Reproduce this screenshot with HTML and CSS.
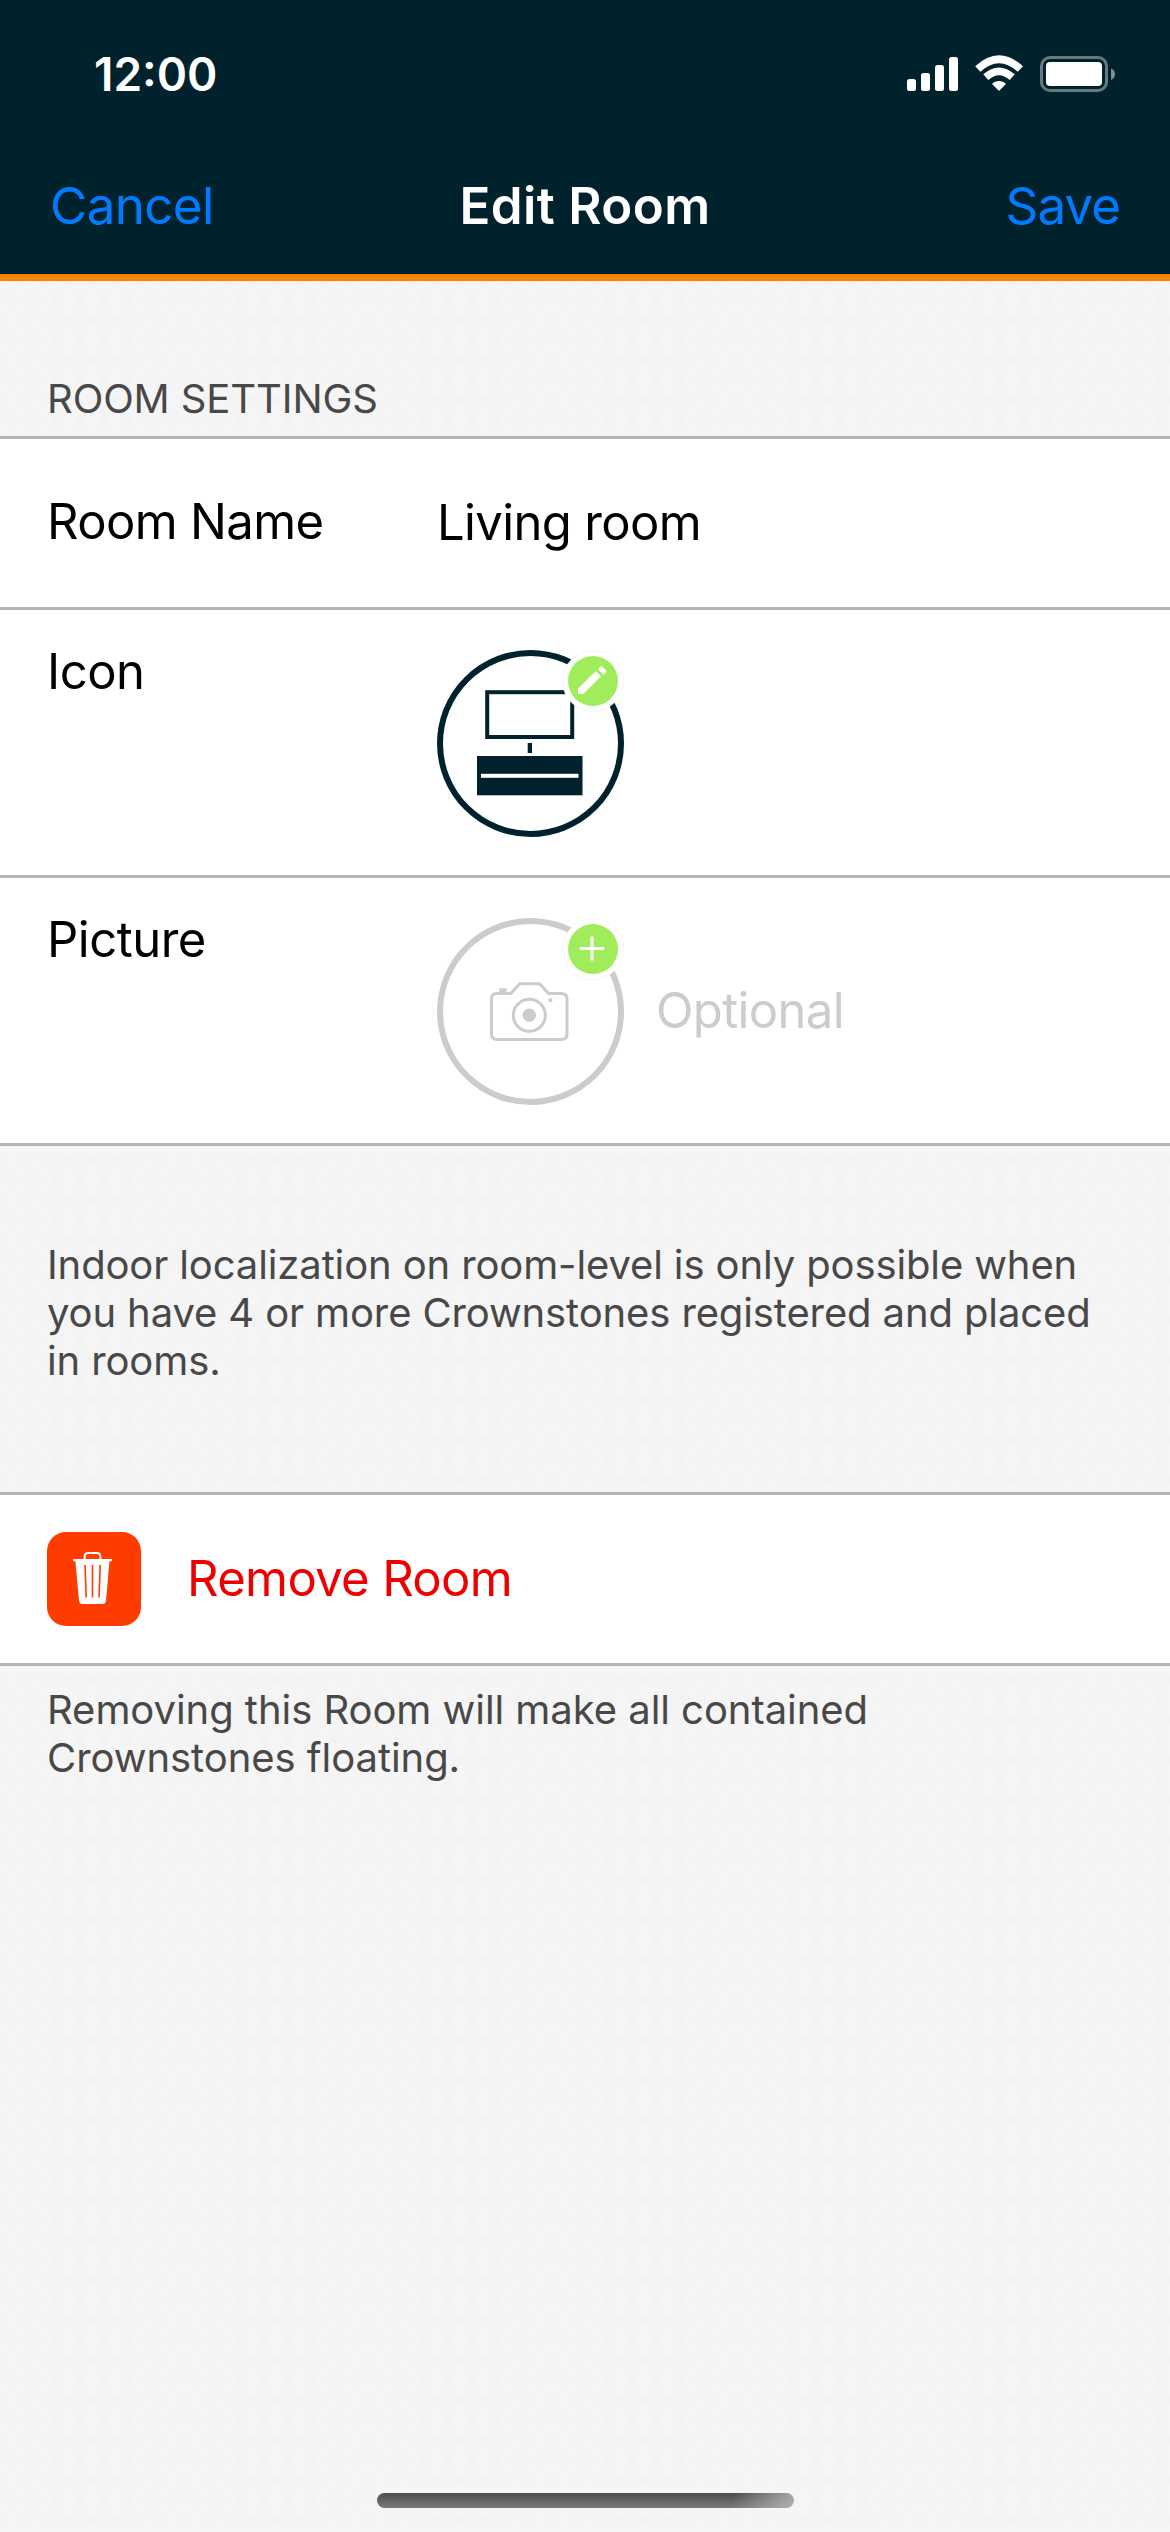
FILE: index.html
```html
<!DOCTYPE html>
<html lang="en">
<head>
<meta charset="utf-8">
<title>Edit Room</title>
<link rel="stylesheet" href="styles.css">
</head>
<body>
<div class="screen">
  <header class="header">
    <div class="status">
      <span class="time">12:00</span>
      <svg class="status-icons" width="208" height="40" viewBox="907 54 208 40">
        <g fill="#fff">
          <rect x="907" y="79" width="9" height="12" rx="2.5"/>
          <rect x="921" y="73" width="9" height="18" rx="2.5"/>
          <rect x="935" y="65" width="9" height="26" rx="2.5"/>
          <rect x="949" y="57" width="9" height="34" rx="2.5"/>
          <rect x="1046" y="62" width="56" height="24" rx="4"/>
          <path d="M999 91l-6.4-6.6q-.6-.8.2-1.4 6.200-4 12.400 0 .8.6.2 1.400z"/>
        </g>
        <g fill="none" stroke="#fff" stroke-width="7.600">
          <path d="M977.800 69Q999 49.500 1020.400 69"/>
          <path d="M985.800 77.200Q999 65.500 1012.200 77.200"/>
        </g>
        <rect x="1041.500" y="57.500" width="65" height="33" rx="8.500" fill="none" stroke="#66797f" stroke-width="3"/>
        <path d="M1111 68.500q4 1.500 4 5.500t-4 6z" fill="#808f94"/>
      </svg>
    </div>
    <nav class="nav">
      <span class="link">Cancel</span>
      <h1 class="title">Edit Room</h1>
      <span class="link save">Save</span>
    </nav>
  </header>

  <main class="content">
    <h2 class="section">ROOM SETTINGS</h2>
    <div class="group">
      <div class="row row-name">
        <span class="label">Room Name</span>
        <span class="value">Living room</span>
      </div>
      <div class="row row-media">
        <span class="label">Icon</span>
        <svg class="ring" width="187" height="187" viewBox="0 0 187 187">
          <circle cx="93.500" cy="93.500" r="90.500" fill="none" stroke="#00222c" stroke-width="6"/>
          <rect x="50.200" y="42.200" width="85" height="44.800" fill="none" stroke="#00222c" stroke-width="4"/>
          <rect x="90.700" y="93" width="4.300" height="10" fill="#00222c"/>
          <rect x="40" y="106" width="105.500" height="39.300" fill="#00222c"/>
          <rect x="44" y="123.800" width="97.500" height="4" fill="#fff"/>
          <circle cx="156" cy="31" r="30.500" fill="#fff" stroke="#e6fad2" stroke-width=".6"/>
          <circle cx="156" cy="31" r="25" fill="#a0ec5a"/>
          <path d="M141 44v-5.400L158.700 21.300l5.300 5L146.200 44zM161 19.200l2-2.200q1.200-1.200 2.400-.2l3.400 3.400q1.200 1.200.2 2.400l-2.500 2.500z" fill="#fff"/>
        </svg>
      </div>
      <div class="row row-media">
        <span class="label">Picture</span>
        <svg class="ring" width="187" height="187" viewBox="0 0 187 187">
          <g fill="none" stroke="#ccc">
            <circle cx="93.500" cy="93.500" r="90.500" stroke-width="6"/>
            <path stroke-width="3" d="M59.500 75.500H73.800L82.800 65.800H102.500L111.500 75.500H124.500Q130 75.500 130 81V116Q130 121.500 124.500 121.500H60Q54.500 121.500 54.500 116V81Q54.500 75.500 59.500 75.500Z"/>
            <circle cx="92.300" cy="97.300" r="16" stroke-width="3"/>
          </g>
          <circle cx="92.300" cy="97.300" r="6.700" fill="#ccc"/>
          <path d="M62.300 70.300h7.400v4.700h-7.400zM111.700 80.300h3.600v3.700h-3.600z" fill="#ccc"/>
          <circle cx="156" cy="31" r="30.500" fill="#fff" stroke="#e6fad2" stroke-width=".6"/>
          <circle cx="156" cy="31" r="25" fill="#a0ec5a"/>
          <path d="M143 30.500h24M155 18.500v24" stroke="#fff" stroke-width="3"/>
        </svg>
        <span class="optional">Optional</span>
      </div>
    </div>

    <p class="info">Indoor localization on room-level is only possible when<br>you have 4 or more Crownstones registered and placed<br>in rooms.</p>

    <div class="group">
      <div class="row row-remove">
        <svg class="trash" width="94" height="94" viewBox="0 0 94 94">
          <rect width="94" height="94" rx="19" fill="#ff3c00"/>
          <path d="M26 27h39v2.300H62.500L59 68.500q-.4 3.500-3.500 3.500H35.500q-3.100 0-3.500-3.500L28.400 29.300H26z" fill="#fff"/>
          <path d="M37.700 27v-2.500q0-3.500 3.500-3.500h8.600q3.500 0 3.500 3.500V27" fill="none" stroke="#fff" stroke-width="2"/>
          <path d="M38 33l1.200 32.500M45.500 33v32.500M53.200 33L52 65.500" stroke="#ff3c00" stroke-width="1.600"/>
        </svg>
        <span class="remove">Remove Room</span>
      </div>
    </div>
    <p class="note">Removing this Room will make all contained<br>Crownstones floating.</p>
  </main>

  <div class="home"></div>
</div>
</body>
</html>
```
FILE: styles.css
```css
* { box-sizing: border-box; }

body {
  margin: 0;
  font-family: Inter, "Liberation Sans", sans-serif;
  font-weight: 400;
  color: #000;
}

h1, h2, p { margin: 0; font-weight: inherit; }
svg { display: block; flex: none; }

.screen {
  display: flex;
  flex-direction: column;
  width: 1170px;
  height: 2532px;
  overflow: hidden;
  background-color: #f5f5f5;
  background-image:
    radial-gradient(circle, #f3f3f3 4px, transparent 7px),
    radial-gradient(circle, #f3f3f3 4px, transparent 7px);
  background-size: 23px 40px;
  background-position: 0 0, 11.5px 20px;
}

/* Header */
.header {
  height: 281px;
  background: #00222c;
  border-bottom: 7px solid #ff8500;
  box-shadow: inset 0 -1px #00171e;
}

.status {
  display: flex;
  justify-content: space-between;
  align-items: center;
  height: 148px;
  padding: 0 55px 0 94px;
}

.time {
  color: #fff;
  font-size: 46px;
  font-weight: 600;
}

.nav {
  display: grid;
  grid-template-columns: 1fr auto 1fr;
  align-items: center;
  height: 114px;
  padding: 0 50px;
  font-size: 51px;
}

.link {
  color: #007aff;
  letter-spacing: -0.6px;
}

.save {
  justify-self: end;
  letter-spacing: -0.9px;
}

.title {
  color: #fff;
  font-size: 51px;
  font-weight: 600;
  letter-spacing: 0.4px;
}

/* Settings list */
.section {
  height: 155px;
  padding: 94px 47px 0;
  color: #484848;
  font-size: 40px;
  line-height: 48px;
  letter-spacing: -0.1px;
}

.group {
  background: #fff;
  border-top: 3px solid #b5b5b5;
}

.row {
  display: flex;
  padding: 0 47px;
  border-bottom: 3px solid #b5b5b5;
  font-size: 49px;
  line-height: 60px;
  letter-spacing: -0.64px;
}

.label {
  width: 390px;
}

.row-name {
  align-items: center;
  height: 171px;
}

.row-name .label { padding-bottom: 2px; }

.row-media {
  height: 268px;
  padding-top: 40px;
}

.row-media .label {
  margin-top: -8px;
  letter-spacing: -0.5px;
}

.optional {
  margin: 63px 0 0 32px;
  color: #ccc;
}

.info, .note {
  color: #484848;
  font-size: 40px;
  line-height: 48px;
  letter-spacing: -0.12px;
}

.info {
  height: 346px;
  padding: 95px 47px 0;
}

.row-remove {
  align-items: center;
  height: 171px;
}

.remove {
  margin-left: 46px;
  padding-bottom: 1px;
  color: #ee0000;
}

.note {
  padding: 20px 47px 0;
  letter-spacing: -0.05px;
}

/* Home indicator */
.home {
  width: 417px;
  height: 15px;
  margin: auto auto 24px;
  border-radius: 8px;
  background:
    linear-gradient(100deg, transparent 85%, rgba(190, 190, 190, 0.8) 100%),
    linear-gradient(#4c4c4c, #7a7a7a);
}
```
